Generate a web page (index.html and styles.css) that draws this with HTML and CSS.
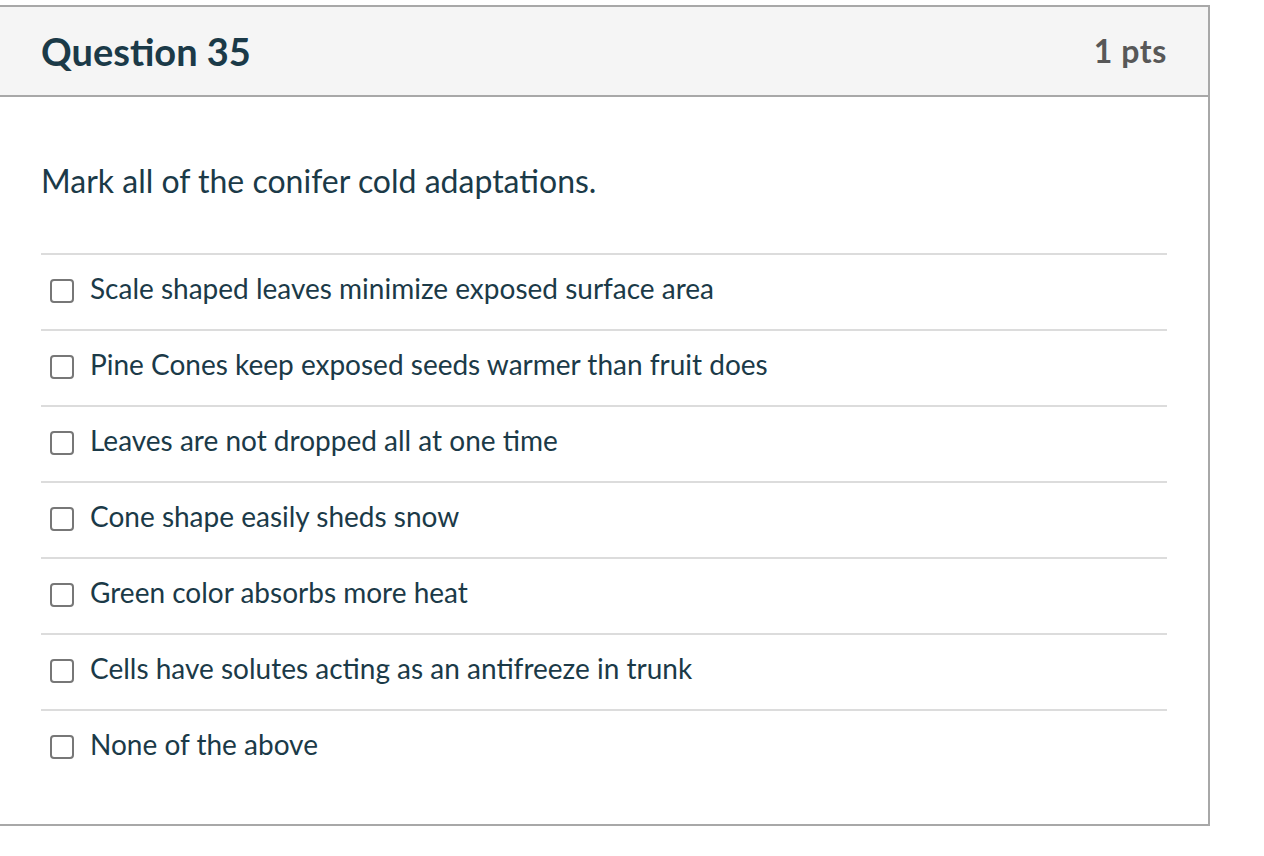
FILE: index.html
```html
<!DOCTYPE html>
<html>
<head>
<meta charset="utf-8">
<link rel="stylesheet" href="styles.css">
</head>
<body>
<div class="card">
  <div class="header">
    <h2 class="title">Question 35</h2>
    <span class="pts">1 pts</span>
  </div>
  <div class="content">
    <p class="question">Mark all of the conifer cold adaptations.</p>
    <div class="answers">
      <label class="answer"><span class="box"></span><span class="label">Scale shaped leaves minimize exposed surface area</span></label>
      <label class="answer"><span class="box"></span><span class="label">Pine Cones keep exposed seeds warmer than fruit does</span></label>
      <label class="answer"><span class="box"></span><span class="label">Leaves are not dropped all at one time</span></label>
      <label class="answer"><span class="box"></span><span class="label">Cone shape easily sheds snow</span></label>
      <label class="answer"><span class="box"></span><span class="label">Green color absorbs more heat</span></label>
      <label class="answer"><span class="box"></span><span class="label">Cells have solutes acting as an antifreeze in trunk</span></label>
      <label class="answer"><span class="box"></span><span class="label">None of the above</span></label>
    </div>
  </div>
</div>
</body>
</html>
```
FILE: styles.css
```css
html, body {
  margin: 0;
  padding: 0;
  background: #ffffff;
}
body {
  font-family: Lato, "Liberation Sans", sans-serif;
  color: #1b3a48;
}
.card {
  margin-top: 5px;
  width: 1208px;
  border-top: 2px solid #a8a8a8;
  border-right: 2px solid #a8a8a8;
  border-bottom: 2px solid #a8a8a8;
  box-sizing: content-box;
}
.header {
  height: 88px;
  background: #f5f5f5;
  border-bottom: 2px solid #a8a8a8;
  display: flex;
  align-items: center;
  justify-content: space-between;
  padding: 0 41px 0 41px;
}
.title {
  margin: 0;
  font-size: 38px;
  font-weight: 700;
  line-height: 46px;
  color: #1b3a48;
}
.pts {
  font-size: 32px;
  font-weight: 700;
  letter-spacing: 0.6px;
  color: #585858;
  line-height: 38px;
}
.content {
  padding: 0 41px 39px 41px;
}
.question {
  margin: 65px 0 53px 0;
  font-size: 32px;
  line-height: 38px;
}
.answers {
  display: flex;
  flex-direction: column;
}
.answer {
  display: flex;
  align-items: flex-start;
  border-top: 2px solid #dcdcdc;
  padding: 16px 0 24px 9px;
  font-size: 28px;
  line-height: 34px;
}
.box {
  width: 20px;
  height: 20px;
  border: 2px solid #777777;
  border-radius: 4px;
  margin-top: 8px;
  margin-right: 16px;
  flex: none;
}
```
